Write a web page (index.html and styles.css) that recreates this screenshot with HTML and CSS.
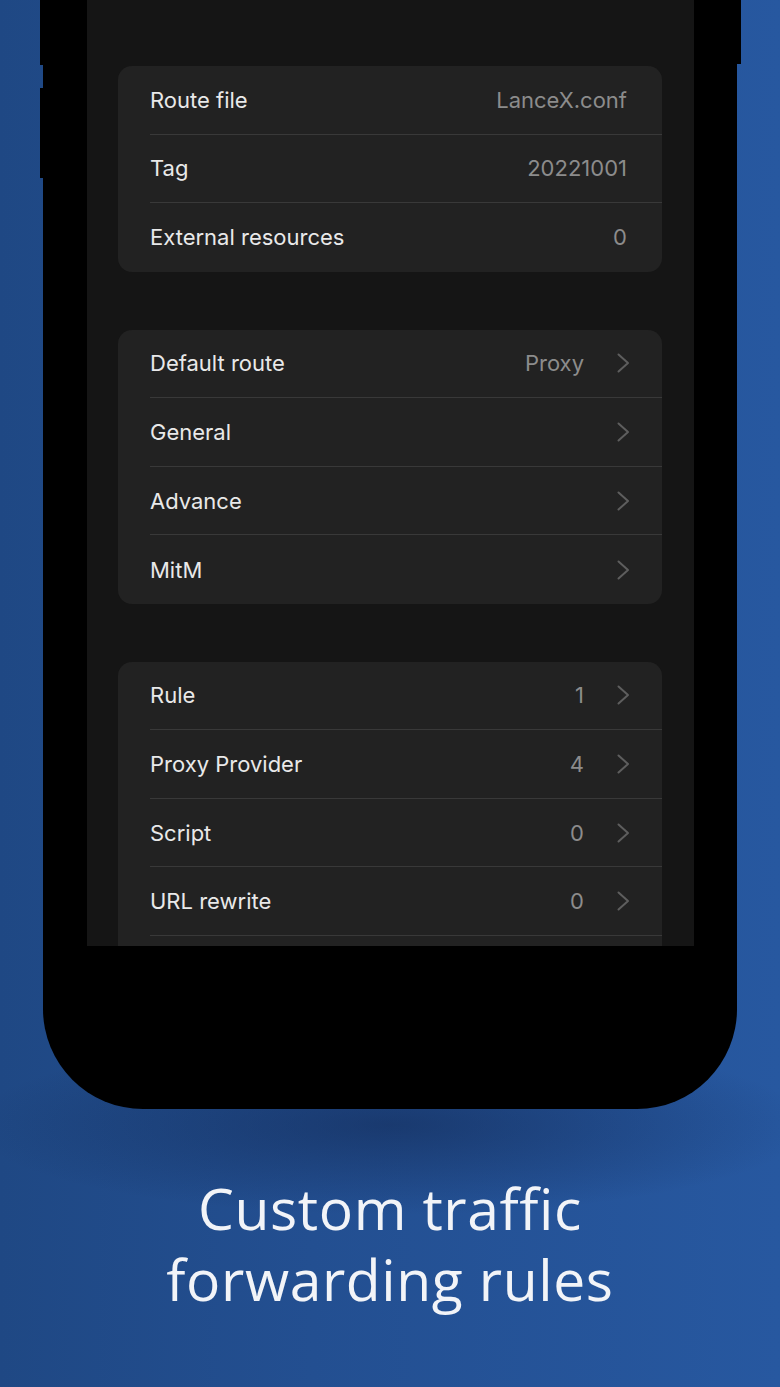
FILE: index.html
```html
<!DOCTYPE html>
<html>
<head>
<meta charset="utf-8">
<link rel="stylesheet" href="styles.css">
</head>
<body>
<div class="page">
  <div class="device">
    <div class="btn btn-l1"></div>
    <div class="btn btn-l2"></div>
    <div class="btn btn-r1"></div>
    <div class="phone">
      <div class="screen">
        <div class="card">
          <div class="row"><span class="label">Route file</span><span class="value plain">LanceX.conf</span></div>
          <div class="row"><span class="label">Tag</span><span class="value plain">20221001</span></div>
          <div class="row"><span class="label">External resources</span><span class="value plain">0</span></div>
        </div>
        <div class="card">
          <div class="row"><span class="label">Default route</span><span class="value">Proxy</span><svg class="chev" viewBox="0 0 13 20"><path d="M1.5 1.5 L11 10 L1.5 18.5"/></svg></div>
          <div class="row"><span class="label">General</span><svg class="chev" viewBox="0 0 13 20"><path d="M1.5 1.5 L11 10 L1.5 18.5"/></svg></div>
          <div class="row"><span class="label">Advance</span><svg class="chev" viewBox="0 0 13 20"><path d="M1.5 1.5 L11 10 L1.5 18.5"/></svg></div>
          <div class="row"><span class="label">MitM</span><svg class="chev" viewBox="0 0 13 20"><path d="M1.5 1.5 L11 10 L1.5 18.5"/></svg></div>
        </div>
        <div class="card">
          <div class="row"><span class="label">Rule</span><span class="value">1</span><svg class="chev" viewBox="0 0 13 20"><path d="M1.5 1.5 L11 10 L1.5 18.5"/></svg></div>
          <div class="row"><span class="label">Proxy Provider</span><span class="value">4</span><svg class="chev" viewBox="0 0 13 20"><path d="M1.5 1.5 L11 10 L1.5 18.5"/></svg></div>
          <div class="row"><span class="label">Script</span><span class="value">0</span><svg class="chev" viewBox="0 0 13 20"><path d="M1.5 1.5 L11 10 L1.5 18.5"/></svg></div>
          <div class="row"><span class="label">URL rewrite</span><span class="value">0</span><svg class="chev" viewBox="0 0 13 20"><path d="M1.5 1.5 L11 10 L1.5 18.5"/></svg></div>
          <div class="row"></div>
        </div>
      </div>
    </div>
  </div>
  <h1 class="caption">Custom traffic<br>forwarding rules</h1>
</div>
</body>
</html>
```
FILE: styles.css
```css
html, body {
  margin: 0;
  padding: 0;
}
body {
  width: 780px;
  height: 1387px;
  overflow: hidden;
  background: linear-gradient(90deg, #1f4884 0%, #234f91 40%, #2758a0 100%);
}
.page {
  position: relative;
  width: 780px;
  height: 1387px;
  background: radial-gradient(ellipse 420px 90px at 390px 1125px, rgba(15, 35, 75, 0.5), rgba(15, 35, 75, 0) 100%);
}
.device {
  position: relative;
  width: 694px;
  margin-left: 43px;
}
.btn {
  position: absolute;
  background: #000;
  width: 4px;
}
.btn-l1 { left: -3px; top: 0; height: 65px; }
.btn-l2 { left: -3px; top: 88px; height: 90px; }
.btn-r1 { right: -4px; top: 0; height: 64px; }
.phone {
  height: 1109px;
  background: #000;
  border-radius: 0 0 100px 100px;
  padding-left: 44px;
  box-sizing: border-box;
}
.screen {
  width: 607px;
  height: 946px;
  background: #151515;
  overflow: hidden;
  padding: 66px 32px 0 31px;
  box-sizing: border-box;
  display: flex;
  flex-direction: column;
  gap: 57.75px;
}
.card {
  background: #222222;
  border-radius: 14px;
  flex-shrink: 0;
}
.row {
  height: 68.6px;
  display: flex;
  align-items: center;
  margin-left: 32px;
  padding-right: 32px;
  border-bottom: 1px solid #393939;
  box-sizing: border-box;
  font-family: Inter, "Liberation Sans", sans-serif;
  font-size: 22px;
}
.row:last-child {
  border-bottom: none;
}
.label {
  color: #e9e9e9;
  flex: 1;
}
.value {
  color: #8c8c8c;
  margin-right: 33px;
}
.value.plain {
  margin-right: 3px;
}
.chev {
  width: 13px;
  height: 20px;
  flex-shrink: 0;
}
.chev path {
  fill: none;
  stroke: #5e5e5e;
  stroke-width: 2;
  stroke-linecap: round;
  stroke-linejoin: round;
}
.caption {
  margin: 64px 0 0 0;
  text-align: center;
  color: #f2f4f8;
  font-family: "Open Sans", "DejaVu Sans", sans-serif;
  font-weight: 400;
  font-size: 57px;
  line-height: 71px;
  letter-spacing: 0.6px;
}
```
